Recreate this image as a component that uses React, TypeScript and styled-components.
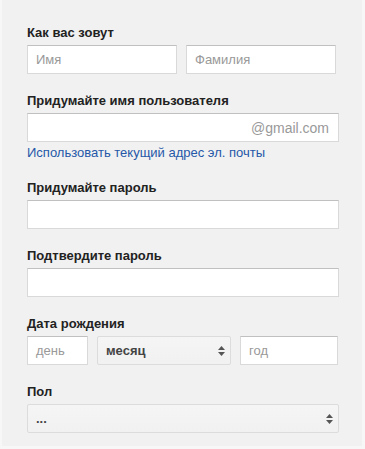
import styled, { createGlobalStyle } from "styled-components";

const GlobalStyle = createGlobalStyle`
  html, body {
    margin: 0;
    padding: 0;
    background: #f7f7f7;
  }
  body {
    font-family: "Liberation Sans", Arial, sans-serif;
    font-size: 13px;
    color: #222;
  }
`;

const Panel = styled.div`
  box-sizing: border-box;
  margin-left: 2px;
  width: 360px;
  height: 446px;
  padding: 25px 0 0 25px;
  background: #f1f1f1;
`;

const Field = styled.div`
  display: flex;
  flex-direction: column;
  width: 312px;
  margin-bottom: 19px;
`;

const Label = styled.label`
  display: block;
  font-weight: bold;
  font-size: 13px;
  line-height: 16px;
  color: #222;
  margin-bottom: 4px;
`;

const Row = styled.div`
  display: flex;
  gap: 9px;
`;

const TextInput = styled.div<{ $width?: number }>`
  box-sizing: border-box;
  width: ${(p) => (p.$width ? `${p.$width}px` : "100%")};
  height: 29px;
  background: #fff;
  border: 1px solid #d9d9d9;
  border-top-color: #c0c0c0;
  display: flex;
  align-items: center;
  padding: 0 8px;
  font-size: 13px;
  color: #999;
`;

const Suffix = styled.span`
  margin-left: auto;
  margin-right: 1px;
  font-size: 14px;
  color: #999;
`;

const Link = styled.a`
  display: block;
  margin-top: 3px;
  font-size: 13px;
  line-height: 16px;
  color: #2558a8;
  text-decoration: none;
`;

const Select = styled.div<{ $width?: number }>`
  box-sizing: border-box;
  width: ${(p) => (p.$width ? `${p.$width}px` : "100%")};
  height: 29px;
  border: 1px solid #dcdcdc;
  border-radius: 2px;
  background: linear-gradient(#f5f5f5, #f1f1f1);
  display: flex;
  align-items: center;
  padding: 0 5px 0 8px;
  font-weight: bold;
  font-size: 13px;
  color: #444;
`;

const Arrows = styled.svg`
  margin-left: auto;
  width: 7px;
  height: 10px;
`;

const SelectArrows = () => (
  <Arrows viewBox="0 0 7 10">
    <path d="M3.5 0 L7 4 L0 4 Z" fill="#555" />
    <path d="M0 6 L7 6 L3.5 10 Z" fill="#555" />
  </Arrows>
);

export default function App() {
  return (
    <>
      <GlobalStyle />
      <Panel>
        <Field>
          <Label>Как вас зовут</Label>
          <Row>
            <TextInput $width={150}>Имя</TextInput>
            <TextInput $width={150}>Фамилия</TextInput>
          </Row>
        </Field>
        <Field>
          <Label>Придумайте имя пользователя</Label>
          <TextInput>
            <Suffix>@gmail.com</Suffix>
          </TextInput>
          <Link href="#">Использовать текущий адрес эл. почты</Link>
        </Field>
        <Field>
          <Label>Придумайте пароль</Label>
          <TextInput />
        </Field>
        <Field>
          <Label>Подтвердите пароль</Label>
          <TextInput />
        </Field>
        <Field>
          <Label>Дата рождения</Label>
          <Row>
            <TextInput $width={61}>день</TextInput>
            <Select $width={134}>
              месяц
              <SelectArrows />
            </Select>
            <TextInput $width={98}>год</TextInput>
          </Row>
        </Field>
        <Field>
          <Label>Пол</Label>
          <Select>
            ...
            <SelectArrows />
          </Select>
        </Field>
      </Panel>
    </>
  );
}
